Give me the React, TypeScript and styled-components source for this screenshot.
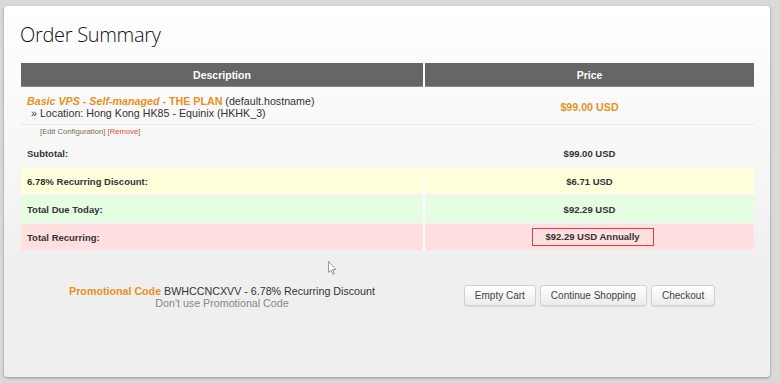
import { createGlobalStyle } from 'styled-components';
import styled from 'styled-components';

const GlobalStyle = createGlobalStyle`
  html, body {
    margin: 0;
    background: #d9d9d9;
  }
  body {
    font-family: 'Liberation Sans', Arial, sans-serif;
    color: #333;
  }
`;

type Tone = 'plain' | 'yellow' | 'green' | 'red';

const tones: Record<Tone, string> = {
  plain: 'transparent',
  yellow: '#ffffdc',
  green: '#e5fde0',
  red: '#ffdfdf',
};

const Page = styled.div`
  padding: 6px 10px 6px 4px;
`;

const Panel = styled.div`
  position: relative;
  height: 371px;
  box-sizing: border-box;
  padding: 14px 16px 0 16px;
  border-radius: 4px;
  background: linear-gradient(#ffffff 0%, #f6f6f6 45%, #efefef 70%, #efefef 100%);
  box-shadow: 0 1px 3px rgba(0, 0, 0, 0.35);
`;

const Title = styled.h1`
  margin: 0 0 13px 0;
  font-family: 'Open Sans', 'Liberation Sans', sans-serif;
  font-weight: 300;
  font-size: 20px;
  line-height: 30px;
  color: #111;
  letter-spacing: -0.3px;
`;

const Table = styled.div`
  margin-left: 1px;
  width: 733px;
  display: flex;
  flex-direction: column;
`;

const Row = styled.div<{ $tone?: Tone; $gap?: number }>`
  display: grid;
  grid-template-columns: 402px 329px;
  column-gap: 2px;
  margin-top: ${(p) => p.$gap ?? 0}px;
  background: ${(p) => (p.$tone && p.$tone !== 'plain' ? '#fff' : 'transparent')};
`;

const HeadCell = styled.div`
  height: 24px;
  background: #666;
  border-bottom: 1px solid #8a8a8a;
  box-sizing: border-box;
  color: #fff;
  font-weight: bold;
  font-size: 10.5px;
  display: flex;
  align-items: center;
  justify-content: center;
`;

const ItemCell = styled.div<{ $center?: boolean }>`
  padding: 6px 6px 5px 6px;
  font-size: 10.7px;
  line-height: 12px;
  border-bottom: 1px solid #e8e8e8;
  display: flex;
  flex-direction: column;
  justify-content: center;
  align-items: ${(p) => (p.$center ? 'center' : 'flex-start')};
`;

const PlanName = styled.span`
  color: #e8901e;
  font-weight: bold;
  font-style: italic;
`;

const PlanTag = styled.span`
  color: #e8901e;
  font-weight: bold;
`;

const Location = styled.div`
  padding-left: 4px;
`;

const ItemPrice = styled.span`
  color: #e8901e;
  font-weight: bold;
  font-size: 10.7px;
`;

const Links = styled.div`
  height: 14px;
  padding-left: 19px;
  font-size: 7.7px;
  line-height: 14px;
  color: #7a6a55;
`;

const RemoveLink = styled.span`
  color: #e0502b;
`;

const SumCell = styled.div<{ $tone: Tone; $center?: boolean }>`
  height: 26px;
  padding: 0 6px;
  background: ${(p) => tones[p.$tone]};
  font-size: 9.5px;
  font-weight: bold;
  color: #333;
  display: flex;
  align-items: center;
  justify-content: ${(p) => (p.$center ? 'center' : 'flex-start')};
`;

const Boxed = styled.span`
  display: inline-block;
  width: 120px;
  height: 16px;
  margin-left: 6px;
  line-height: 16px;
  text-align: center;
  border: 1px solid #e23b3b;
`;

const Footer = styled.div`
  margin-top: 35px;
  display: grid;
  grid-template-columns: 402px 329px;
  column-gap: 2px;
  margin-left: 1px;
`;

const Promo = styled.div`
  text-align: center;
  font-size: 10.7px;
  line-height: 12px;
`;

const PromoLabel = styled.span`
  color: #e8901e;
  font-weight: bold;
`;

const PromoRemove = styled.div`
  color: #888;
`;

const Buttons = styled.div`
  display: flex;
  justify-content: center;
  gap: 4px;
`;

const Button = styled.button`
  height: 21px;
  padding: 0 10px;
  border: 1px solid #d2d2d2;
  border-radius: 3px;
  background: linear-gradient(#ffffff, #ececec);
  box-shadow: 0 1px 1px rgba(0, 0, 0, 0.08);
  font-family: 'Liberation Sans', Arial, sans-serif;
  font-size: 10px;
  color: #444;
`;

const Cursor = styled.svg`
  position: absolute;
  left: 324px;
  top: 255px;
`;

const summary: { label: string; value: string; tone: Tone; boxed?: boolean }[] = [
  { label: 'Subtotal:', value: '$99.00 USD', tone: 'plain' },
  { label: '6.78% Recurring Discount:', value: '$6.71 USD', tone: 'yellow' },
  { label: 'Total Due Today:', value: '$92.29 USD', tone: 'green' },
  { label: 'Total Recurring:', value: '$92.29 USD Annually', tone: 'red', boxed: true },
];

export default function App() {
  return (
    <>
      <GlobalStyle />
      <Page>
        <Panel>
          <Title>Order Summary</Title>
          <Table>
            <Row>
              <HeadCell>Description</HeadCell>
              <HeadCell>Price</HeadCell>
            </Row>
            <Row $gap={2}>
              <ItemCell>
                <div>
                  <PlanName>Basic VPS - Self-managed</PlanName>
                  <PlanTag> - THE PLAN</PlanTag> (default.hostname)
                </div>
                <Location>» Location: Hong Kong HK85 - Equinix (HKHK_3)</Location>
              </ItemCell>
              <ItemCell $center>
                <ItemPrice>$99.00 USD</ItemPrice>
              </ItemCell>
            </Row>
            <Links>
              [Edit Configuration] <RemoveLink>[Remove]</RemoveLink>
            </Links>
            {summary.map((s, i) => (
              <Row key={s.label} $tone={s.tone} $gap={i === 0 ? 1 : 2}>
                <SumCell $tone={s.tone}>{s.label}</SumCell>
                <SumCell $tone={s.tone} $center>
                  {s.boxed ? <Boxed>{s.value}</Boxed> : s.value}
                </SumCell>
              </Row>
            ))}
          </Table>
          <Footer>
            <Promo>
              <div>
                <PromoLabel>Promotional Code</PromoLabel> BWHCCNCXVV - 6.78% Recurring Discount
              </div>
              <PromoRemove>Don't use Promotional Code</PromoRemove>
            </Promo>
            <Buttons>
              <Button>Empty Cart</Button>
              <Button>Continue Shopping</Button>
              <Button>Checkout</Button>
            </Buttons>
          </Footer>
          <Cursor width="10" height="15" viewBox="0 0 10 15">
            <path d="M0.5 0.5 L0.5 11.5 L3 9 L5 13.5 L6.5 12.8 L4.6 8.5 L8 8.5 Z" fill="#fff" stroke="#999" strokeWidth="1" />
          </Cursor>
        </Panel>
      </Page>
    </>
  );
}
